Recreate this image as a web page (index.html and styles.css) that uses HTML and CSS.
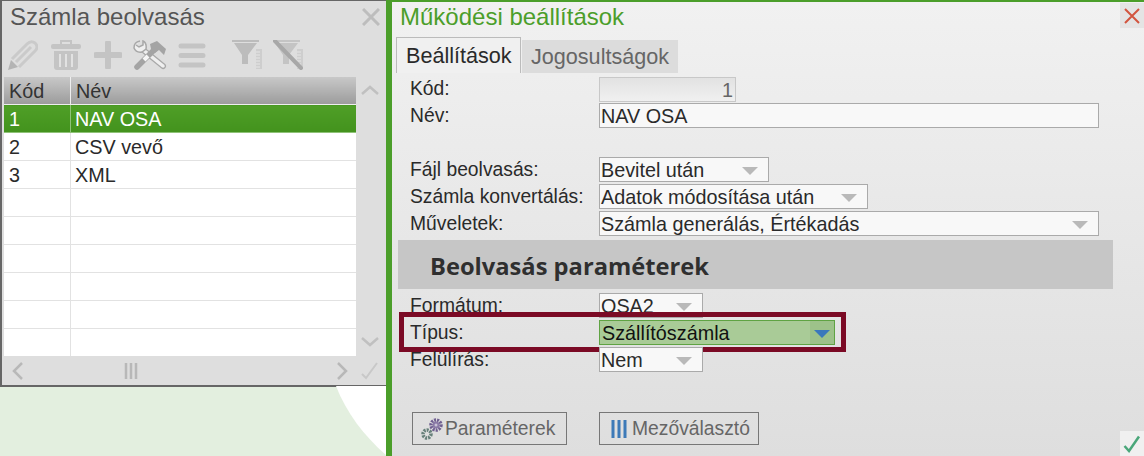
FILE: index.html
```html
<!DOCTYPE html>
<html lang="hu">
<head>
    <meta charset="UTF-8">
    <title>Működési beállítások</title>
    <link rel="stylesheet" href="styles.css">
</head>
<body>

<div class="side">
    <svg class="side-curve" width="60" height="70" viewBox="0 0 60 70"><path d="M0 0 C10 26 28 50 50 69 L60 70 L60 0 Z" fill="#fff"/></svg>
    <div class="list-panel">
        <div class="panel-title">
            <span>Számla beolvasás</span>
            <svg class="panel-close" width="18" height="18" viewBox="0 0 18 18"><path d="M1 1 L17 17 M17 1 L1 17" stroke="#bdbdbd" stroke-width="3"/></svg>
        </div>
        <div class="toolbar">
            <svg width="30" height="30" viewBox="0 0 30 30"><path d="M0 30 L3 20 L10 27 Z" fill="#b4b4b4"/><path d="M4 19 L19 4 Q23 0 27 3 Q31 7 27 11 L11 27 M8 22 L23 7" fill="none" stroke="#cacaca" stroke-width="3"/></svg>
            <svg width="30" height="30" viewBox="0 0 30 30"><path d="M10 4 V1 H20 V4" fill="none" stroke="#c4c4c4" stroke-width="2"/><rect x="0" y="4" width="30" height="5" rx="2" fill="#c4c4c4"/><path d="M3 11 H27 V27 Q27 30 24 30 H6 Q3 30 3 27 Z" fill="#c4c4c4"/><path d="M9 14 V27 M15 14 V27 M21 14 V27" stroke="#e2e2e2" stroke-width="2"/></svg>
            <svg width="28" height="28" viewBox="0 0 28 28"><path d="M14 2 V26 M2 14 H26" stroke="#c4c4c4" stroke-width="6" stroke-linecap="round"/></svg>
            <svg class="toolbar-tools" width="34" height="30" viewBox="0 0 34 30">
                <path d="M9 9 L30 26" stroke="#a8a8a8" stroke-width="6" stroke-linecap="round"/>
                <path d="M9 9 L30 26" stroke="#efefef" stroke-width="3.500" stroke-linecap="round"/>
                <path d="M7 1 Q1 2 1 8 Q3 13 9 12 L13 9 Q14 3 10 1 L10 5 L6 7 L3 5" fill="#efefef" stroke="#a8a8a8" stroke-width="1.500"/>
                <path d="M22 9 L4 27" stroke="#a4a4a4" stroke-width="5.500" stroke-linecap="round"/>
                <path d="M15 16 L11 20" stroke="#f6f6f6" stroke-width="4"/>
                <path d="M17 4 L24 1 L33 9 L31 15 L26 10 L22 13 L18 9 Z" fill="#a4a4a4"/>
            </svg>
            <svg class="toolbar-menu" width="28" height="25" viewBox="0 0 28 25"><path d="M3 3 H25 M3 12.500 H25 M3 22 H25" stroke="#c4c4c4" stroke-width="5" stroke-linecap="round"/></svg>
            <svg class="toolbar-filter" width="30" height="30" viewBox="0 0 30 30"><path d="M0 0 H27 V2 H0 Z M2 3 H25 L16 15 V24 L10 24 V15 Z" fill="#bcbcbc"/><path d="M24 9 H30 V29 H24 Z" fill="#cecece"/><path d="M24 12 H28 M24 15 H28 M24 18 H28 M24 21 H28 M24 24 H28 M24 27 H28" stroke="#e6e6e6" stroke-width="1"/></svg>
            <svg class="toolbar-unfilter" width="30" height="30" viewBox="0 0 30 30"><path d="M0 0 H27 V2 H0 Z M2 3 H25 L16 15 V24 L10 24 V15 Z" fill="#c4c4c4"/><path d="M24 9 H30 V29 H24 Z" fill="#cecece"/><path d="M24 12 H28 M24 15 H28 M24 18 H28 M24 21 H28 M24 24 H28 M24 27 H28" stroke="#e6e6e6" stroke-width="1"/><path d="M2 1 L28 28" stroke="#a8a8a8" stroke-width="4" stroke-linecap="round"/></svg>
        </div>
        <div class="grid-area">
            <table class="list-table">
                <thead>
                    <tr><th class="col-code">Kód</th><th>Név</th></tr>
                </thead>
                <tbody>
                    <tr class="selected"><td>1</td><td>NAV OSA</td></tr>
                    <tr><td>2</td><td>CSV vevő</td></tr>
                    <tr><td>3</td><td>XML</td></tr>
                    <tr><td></td><td></td></tr>
                    <tr><td></td><td></td></tr>
                    <tr><td></td><td></td></tr>
                    <tr><td></td><td></td></tr>
                    <tr><td></td><td></td></tr>
                    <tr><td></td><td></td></tr>
                </tbody>
            </table>
            <div class="scroll-col">
                <svg width="18" height="10" viewBox="0 0 18 10"><path d="M1 9 L9 2 L17 9" fill="none" stroke="#c0c0c0" stroke-width="2.500"/></svg>
                <svg width="18" height="10" viewBox="0 0 18 10"><path d="M1 1 L9 8 L17 1" fill="none" stroke="#c0c0c0" stroke-width="2.500"/></svg>
            </div>
        </div>
        <div class="panel-footer">
            <svg width="12" height="18" viewBox="0 0 12 18"><path d="M10 1 L2 9 L10 17" fill="none" stroke="#b8b8b8" stroke-width="2.500"/></svg>
            <svg class="footer-grip" width="14" height="16" viewBox="0 0 14 16"><path d="M2 0 V16 M7 0 V16 M12 0 V16" stroke="#b8b8b8" stroke-width="2.500"/></svg>
            <svg class="footer-next" width="12" height="18" viewBox="0 0 12 18"><path d="M2 1 L10 9 L2 17" fill="none" stroke="#b8b8b8" stroke-width="2.500"/></svg>
            <svg class="footer-ok" width="18" height="18" viewBox="0 0 18 18"><path d="M1 12 L5 16 L16 1" fill="none" stroke="#c8c8c8" stroke-width="2"/></svg>
        </div>
    </div>
</div>

<div class="settings">
    <div class="settings-title">Működési beállítások</div>
    <div class="icon-box close-box">
        <svg width="16" height="16" viewBox="0 0 16 16"><path d="M1 1 L15 15 M15 1 L1 15" stroke="#d2553f" stroke-width="2"/></svg>
    </div>

    <div class="tabs">
        <div class="tab active">Beállítások</div>
        <div class="tab">Jogosultságok</div>
    </div>

    <div class="form-row row-small">
        <label>Kód:</label>
        <div class="field field-code">1</div>
    </div>
    <div class="form-row">
        <label>Név:</label>
        <div class="field field-wide">NAV OSA</div>
    </div>

    <div class="form-group">
        <div class="form-row">
            <label>Fájl beolvasás:</label>
            <div class="field select select-short">Bevitel után<i class="arrow"></i></div>
        </div>
        <div class="form-row">
            <label>Számla konvertálás:</label>
            <div class="field select select-mid">Adatok módosítása után<i class="arrow"></i></div>
        </div>
        <div class="form-row">
            <label>Műveletek:</label>
            <div class="field select field-wide">Számla generálás, Értékadás<i class="arrow"></i></div>
        </div>
    </div>

    <div class="section-band">Beolvasás paraméterek</div>

    <div class="form-row">
        <label>Formátum:</label>
        <div class="field select select-tiny">OSA2<i class="arrow"></i></div>
    </div>
    <div class="form-row">
        <label>Típus:</label>
        <div class="field select select-focus">Szállítószámla<i class="arrow-box"><i class="arrow"></i></i></div>
        <div class="red-frame"></div>
    </div>
    <div class="form-row">
        <label>Felülírás:</label>
        <div class="field select select-tiny">Nem<i class="arrow"></i></div>
    </div>

    <div class="buttons">
        <button class="btn btn-params">
            <svg width="24" height="24" viewBox="0 0 24 24">
                <circle cx="15" cy="8" r="5" fill="none" stroke="#6f5f90" stroke-width="3.500" stroke-dasharray="2 1"/>
                <circle cx="15" cy="8" r="3.500" fill="#8a7aa6"/>
                <circle cx="15" cy="8" r="1.500" fill="#c9c3d6"/>
                <circle cx="6" cy="17" r="4" fill="none" stroke="#66807a" stroke-width="3.500" stroke-dasharray="2 1"/>
                <circle cx="6" cy="17" r="1.500" fill="#dfdfdf"/>
            </svg>Paraméterek
        </button>
        <button class="btn btn-fields">
            <svg width="16" height="18" viewBox="0 0 16 18"><path d="M2 0 V18 M8 0 V18 M14 0 V18" stroke="#3d7ab8" stroke-width="3"/></svg>Mezőválasztó
        </button>
    </div>

    <div class="icon-box ok-box">
        <svg width="18" height="18" viewBox="0 0 18 18"><path d="M1.500 11 L6 16 L16 1.500" fill="none" stroke="#4aa77a" stroke-width="2.500"/></svg>
    </div>
</div>

</body>
</html>
```

FILE: styles.css
```css
html, body {
    margin: 0;
    height: 456px;
    overflow: hidden;
}

body {
    display: flex;
    font-family: "Liberation Sans", Arial, sans-serif;
    font-size: 19.3px;
    color: #2a2a2a;
    background: #fff;
}

.side {
    position: relative;
    width: 386px;
    flex-shrink: 0;
    background: #e3efdf;
}

.side-curve {
    position: absolute;
    left: 336px;
    top: 386px;
}

.list-panel {
    height: 384px;
    display: flex;
    flex-direction: column;
    background: #dedede;
    border-top: 1px solid #666;
    border-left: 2px solid #666;
    border-bottom: 2px solid #666;
}

.panel-title {
    display: flex;
    align-items: center;
    justify-content: space-between;
    height: 33px;
    padding: 0 6px 0 8px;
    font-size: 24px;
    color: #555;
}

.toolbar {
    display: flex;
    align-items: center;
    gap: 13px;
    height: 40px;
    padding: 2px 0 0 6px;
    margin-bottom: 2px;
}

.toolbar-tools,
.toolbar-menu,
.toolbar-unfilter {
    margin-left: -2px;
}

.toolbar-filter {
    margin-left: 13px;
}

.grid-area {
    display: flex;
    flex: 1;
    padding-left: 2px;
}

.list-table {
    width: 352px;
    height: 279px;
    border-collapse: collapse;
    table-layout: fixed;
    font-size: 19.8px;
    background: #fff;
}

.list-table th {
    height: 26px;
    padding: 1px 0 0 5px;
    font-weight: normal;
    text-align: left;
    color: #333;
    background: linear-gradient(#c8c8c8, #9c9c9c);
    border-left: 1px solid #eee;
    border-bottom: 1px solid #eee;
}

.list-table th.col-code {
    width: 61px;
    border-left: 0;
}

.list-table td {
    height: 26px;
    padding: 1px 0 0 4px;
    border-left: 1px solid #e2e2e2;
    border-bottom: 1px solid #e2e2e2;
}

.list-table td:first-child {
    border-left: 0;
    padding-left: 5px;
}

.list-table tr:last-child td {
    border-bottom: 0;
}

.list-table .selected td {
    color: #fff;
    background: linear-gradient(#4f9f27, #43921d);
    border-color: #8fc278;
}

.scroll-col {
    display: flex;
    flex-direction: column;
    justify-content: space-between;
    align-items: center;
    width: 28px;
    padding: 8px 0 9px;
}

.panel-footer {
    display: flex;
    align-items: center;
    height: 29px;
    padding: 0 7px 0 10px;
}

.footer-grip {
    margin-left: 100px;
}

.footer-next {
    margin-left: 198px;
}

.footer-ok {
    margin-left: 13px;
}

.settings {
    position: relative;
    flex: 1;
    padding-left: 6px;
    background: linear-gradient(#f1f1f1, #dedede);
    border-top: 2px solid #4b9e2a;
    border-left: 6px solid #4b9e2a;
}

.settings-title {
    height: 34px;
    padding: 1px 0 0 2px;
    font-size: 24px;
    line-height: 28px;
    color: #4b9e2a;
}

.icon-box {
    position: absolute;
    right: 0;
    display: flex;
    align-items: center;
    justify-content: center;
    width: 24px;
    height: 25px;
}

.close-box {
    top: 1px;
    background: #e4e4e4;
}

.ok-box {
    bottom: 0;
    background: #f0f0f0;
}

.tabs {
    display: flex;
    align-items: flex-end;
    gap: 1px;
    height: 36px;
    margin-left: -2px;
    margin-bottom: 3px;
}

.tab {
    height: 33px;
    padding: 0 9px;
    font-size: 21.6px;
    line-height: 33px;
    color: #666;
    background: #dcdcdc;
}

.tab.active {
    height: 36px;
    line-height: 36px;
    color: #2a2a2a;
    background: #f0f0f0;
    border: 1px solid #bbb;
    border-bottom: 0;
    box-sizing: border-box;
    width: 125px;
}

.form-row {
    position: relative;
    display: grid;
    grid-template-columns: 189px auto;
    justify-content: start;
    align-items: center;
    height: 27px;
    padding-left: 12px;
    line-height: 22px;
}

.row-small {
    height: 26px;
}

.form-group {
    margin-top: 27px;
}

.field {
    position: relative;
    box-sizing: border-box;
    height: 25px;
    padding-left: 1px;
    font-size: 19.8px;
    line-height: 24px;
    background: #f8f8f8;
    border: 1px solid #aaa;
}

.field-code {
    width: 137px;
    padding-right: 2px;
    text-align: right;
    color: #666;
    background: linear-gradient(#e2e2e2, #f0f0f0);
    border-color: #c8c8c8;
}

.field-wide {
    width: 500px;
}

.select-short {
    width: 170px;
}

.select-mid {
    width: 269px;
}

.select-tiny {
    width: 104px;
}

.select-focus {
    width: 236px;
    padding-left: 2px;
    background: #a9cb97;
    border-color: #5fa343;
    color: #111;
}

.arrow {
    position: absolute;
    right: 10px;
    top: 9px;
    border-top: 8px solid #b9b9b9;
    border-left: 8px solid transparent;
    border-right: 8px solid transparent;
}

.arrow-box {
    position: absolute;
    right: 0;
    top: 0;
    bottom: 0;
    width: 24px;
    background: #9dc28a;
}

.arrow-box .arrow {
    right: 4px;
    border-top-color: #3a78bc;
}

.red-frame {
    position: absolute;
    left: 1px;
    top: -7px;
    width: 447px;
    height: 40px;
    box-sizing: border-box;
    border: 5px solid #7b0a25;
}

.section-band {
    height: 49px;
    margin-top: 3px;
    margin-bottom: 3px;
    width: 715px;
    padding-left: 32px;
    box-sizing: border-box;
    font-family: "Open Sans", sans-serif;
    font-size: 23.7px;
    font-weight: 700;
    line-height: 52px;
    color: #2f2f2f;
    background: #c6c6c6;
}

.buttons {
    display: flex;
    gap: 32px;
    margin-top: 39px;
    margin-left: 14px;
}

.btn {
    display: flex;
    align-items: center;
    height: 33px;
    padding: 0;
    font-family: inherit;
    font-size: 19.3px;
    color: #666;
    background: transparent;
    border: 1px solid #777;
}

.btn-params {
    width: 155px;
    padding-left: 8px;
}

.btn-fields {
    width: 160px;
    padding-left: 11px;
    gap: 5px;
}
```
